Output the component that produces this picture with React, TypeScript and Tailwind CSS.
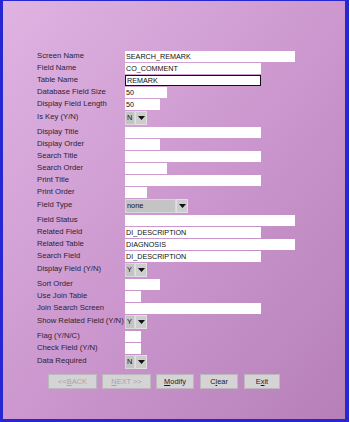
import React from "react";

type Row =
  | { label: string; kind: "text"; width: number; value?: string; focused?: boolean }
  | { label: string; kind: "combo"; value: string; width?: number };

const rows: Row[] = [
  { label: "Screen Name", kind: "text", width: 170, value: "SEARCH_REMARK" },
  { label: "Field Name", kind: "text", width: 136, value: "CO_COMMENT" },
  { label: "Table Name", kind: "text", width: 136, value: "REMARK", focused: true },
  { label: "Database Field Size", kind: "text", width: 42, value: "50" },
  { label: "Display Field Length", kind: "text", width: 35, value: "50" },
  { label: "Is Key (Y/N)", kind: "combo", value: "N" },
  { label: "Display Title", kind: "text", width: 136 },
  { label: "Display Order", kind: "text", width: 35 },
  { label: "Search Title", kind: "text", width: 136 },
  { label: "Search Order", kind: "text", width: 42 },
  { label: "Print Title", kind: "text", width: 136 },
  { label: "Print Order", kind: "text", width: 22 },
  { label: "Field Type", kind: "combo", value: "none", width: 63 },
  { label: "Field Status", kind: "text", width: 170 },
  { label: "Related Field", kind: "text", width: 136, value: "DI_DESCRIPTION" },
  { label: "Related Table", kind: "text", width: 170, value: "DIAGNOSIS" },
  { label: "Search Field", kind: "text", width: 136, value: "DI_DESCRIPTION" },
  { label: "Display Field (Y/N)", kind: "combo", value: "Y" },
  { label: "Sort Order", kind: "text", width: 35 },
  { label: "Use Join Table", kind: "text", width: 16 },
  { label: "Join Search Screen", kind: "text", width: 136 },
  { label: "Show Related Field (Y/N)", kind: "combo", value: "Y" },
  { label: "Flag (Y/N/C)", kind: "text", width: 16 },
  { label: "Check Field (Y/N)", kind: "text", width: 16 },
  { label: "Data Required", kind: "combo", value: "N" },
];

function Arrow() {
  return (
    <svg width="7" height="4" viewBox="0 0 7 4">
      <path d="M0 0 H7 L3.5 4 Z" fill="#111" />
    </svg>
  );
}

function Combo({ value, width }: { value: string; width?: number }) {
  const w = width ?? 22;
  return (
    <div className="flex h-[14px]" style={{ width: w }}>
      <div className="flex flex-1 items-center border border-[#d8d8d8] bg-[#c4c4c4] pl-[1px] text-[7.4px] leading-none text-[#111]">
        {value}
      </div>
      <div className="flex w-[12px] items-center justify-center border border-[#e0e0e0] bg-[#cdcdcd]">
        <Arrow />
      </div>
    </div>
  );
}

function Field({ row }: { row: Row }) {
  if (row.kind === "combo") {
    return (
      <div className="flex h-[16px] items-start">
        <div className="w-[88px] pt-[1px] text-[7.7px] leading-[10px] text-[#2c2232]">{row.label}</div>
        <Combo value={row.value} width={row.width} />
      </div>
    );
  }
  return (
    <div className="flex h-[12px] items-start">
      <div className="w-[88px] text-[7.7px] leading-[10px] text-[#2c2232]">{row.label}</div>
      <div
        className={
          "flex h-[11px] items-center bg-white pl-[1px] text-[7.2px] leading-none text-[#111] " +
          (row.focused ? "border-[1.5px] border-[#111]" : "")
        }
        style={{ width: row.width }}
      >
        {row.value}
      </div>
    </div>
  );
}

function Btn({
  pre,
  key1,
  post,
  disabled,
  width,
}: {
  pre: string;
  key1: string;
  post: string;
  disabled?: boolean;
  width: number;
}) {
  return (
    <div
      className={
        "flex h-[15px] items-center justify-center border border-[#bdb8bd] bg-[#d6d3d6] text-[7.4px] leading-none " +
        (disabled ? "text-[#a8a4a8]" : "text-[#1a1a1a]")
      }
      style={{ width }}
    >
      {pre}
      <span className="underline">{key1}</span>
      {post}
    </div>
  );
}

export default function App() {
  return (
    <div className="h-[422px] w-[350px] bg-white" style={{ fontFamily: '"Liberation Sans", Arial, sans-serif' }}>
      <div className="h-[422px] w-[349px] border-b-[3px] border-l-[3px] border-r-[4px] border-t border-[#2626d2] bg-gradient-to-br from-[#dfb3e2] via-[#cc98cf] to-[#b67fb8]">
        <div className="flex flex-col pl-[34px] pt-[50px]">
          {rows.map((r) => (
            <Field key={r.label} row={r} />
          ))}
          <div className="ml-[11px] mt-[3px] flex gap-[5px]">
            <Btn pre="<< " key1="B" post="ACK" disabled width={49} />
            <Btn pre="" key1="N" post="EXT >>" disabled width={49} />
            <div className="flex gap-[6px]">
              <Btn pre="" key1="M" post="odify" width={38} />
              <Btn pre="C" key1="l" post="ear" width={38} />
              <Btn pre="E" key1="x" post="it" width={36} />
            </div>
          </div>
        </div>
      </div>
    </div>
  );
}
